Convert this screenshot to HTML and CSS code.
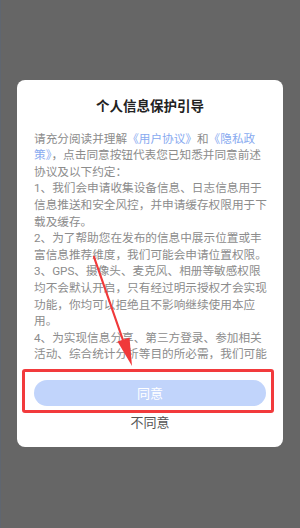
FILE: index.html
```html
<!DOCTYPE html>
<html lang="zh-CN">
<head>
<meta charset="utf-8">
<link rel="stylesheet" href="styles.css">
</head>
<body>
<div class="screen">
  <div class="card">
    <h1 class="title">个人信息保护引导</h1>
    <div class="content">
      <p class="text">请充分阅读并理解<span class="link">《用户协议》</span>和<span class="link">《隐私政<br>策》</span>，点击同意按钮代表您已知悉并同意前述<br>协议及以下约定：<br>1、我们会申请收集设备信息、日志信息用于<br>信息推送和安全风控，并申请缓存权限用于下<br>载及缓存。<br>2、为了帮助您在发布的信息中展示位置或丰<br>富信息推荐维度，我们可能会申请位置权限。<br>3、GPS、摄像头、麦克风、相册等敏感权限<br>均不会默认开启，只有经过明示授权才会实现<br>功能，你均可以拒绝且不影响继续使用本应<br>用。<br>4、为实现信息分享、第三方登录、参加相关<br>活动、综合统计分析等目的所必需，我们可能</p>
    </div>
    <div class="actions">
      <div class="agree-wrap">
        <button class="agree">同意</button>
        <div class="highlight"></div>
      </div>
      <div class="disagree">不同意</div>
    </div>
  </div>
  <svg class="arrow" width="300" height="528" viewBox="0 0 300 528">
    <line x1="93" y1="257" x2="124" y2="346" stroke="#f0393a" stroke-width="2.2" stroke-linecap="round"/>
    <polygon points="131,366 116.5,341.5 128.5,337.5" fill="#f0393a"/>
  </svg>
</div>
</body>
</html>
```

FILE: styles.css
```css
html, body {
  margin: 0;
  padding: 0;
}
body {
  background: #666666;
  font-family: Roboto, "Noto Sans CJK SC", sans-serif;
}
.screen {
  position: relative;
  width: 300px;
  height: 528px;
  padding-top: 80px;
  box-sizing: border-box;
  border-left: 1px solid #5f6670;
}
.card {
  margin-left: 16px;
  width: 266px;
  background: #ffffff;
  border-radius: 8px;
  padding: 16px 17px 15px;
  box-sizing: border-box;
}
.title {
  margin: 0;
  text-align: center;
  font-size: 13.5px;
  line-height: 20px;
  font-weight: bold;
  color: #222222;
}
.content {
  margin-top: 14.7px;
  height: 234px;
}
.text {
  margin: 0;
  font-size: 11.65px;
  line-height: 16.6px;
  color: #8c8c8c;
  white-space: nowrap;
}
.link {
  color: #88aaf0;
}
.actions {
  display: flex;
  flex-direction: column;
  align-items: stretch;
  margin-top: 15px;
}
.agree-wrap {
  position: relative;
}
.agree {
  display: block;
  width: 100%;
  height: 26px;
  border: none;
  border-radius: 13px;
  background: #c1d4fb;
  color: #ffffff;
  font-family: Roboto, "Noto Sans CJK SC", sans-serif;
  font-size: 13px;
  padding: 0;
}
.highlight {
  position: absolute;
  left: -12px;
  right: -8px;
  top: -11px;
  bottom: -7px;
  border: 3px solid #f23a3c;
  border-radius: 3px;
}
.disagree {
  margin-top: 8px;
  text-align: center;
  font-size: 13px;
  line-height: 18px;
  color: #555555;
}
.arrow {
  position: absolute;
  left: 0;
  top: 0;
  pointer-events: none;
}
```
